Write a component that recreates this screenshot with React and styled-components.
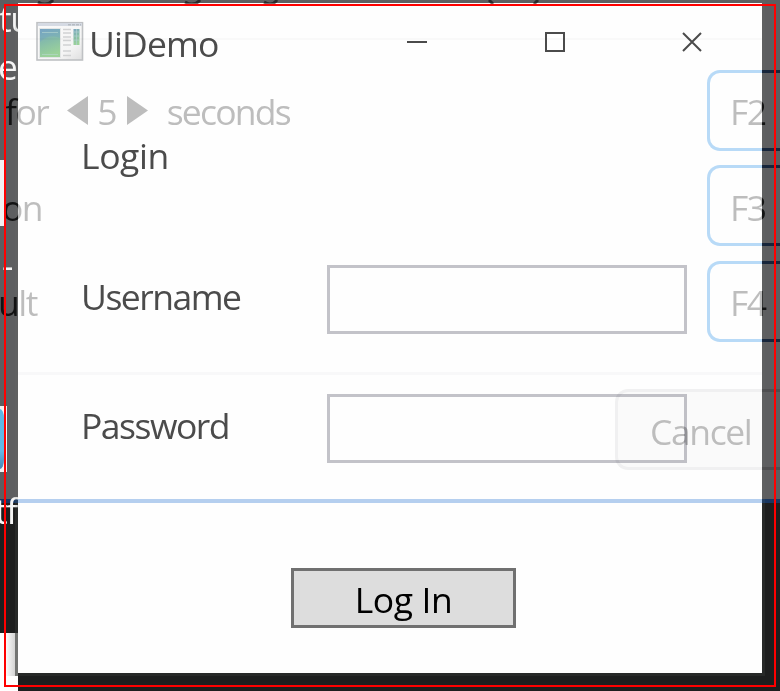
import React from "react";
import styled, { createGlobalStyle, css } from "styled-components";

const GlobalStyle = createGlobalStyle`
  * { box-sizing: border-box; }
  body { margin: 0; background: #1d1e1e; overflow: hidden; }
`;

const type = css`
  font-family: "Open Sans", "Noto Sans", sans-serif;
  font-size: 35.5px;
  font-weight: 400;
  line-height: 48px;
  white-space: pre;
  letter-spacing: ${(p) => p.$track ?? -1.5}px;
`;

const Desktop = styled.main`
  position: relative;
  width: 780px;
  height: 691px;
  overflow: hidden;
  display: grid;
  grid-template-columns: 18px 744px 18px;
  grid-template-rows: 3px 670px 18px;
  background: linear-gradient(#5d5e60 0 499px, #183660 499px 503px, #1d1e1e 503px);
`;

const Window = styled.section`
  grid-column: 2;
  grid-row: 2;
  display: flex;
  flex-direction: column;
  background: #fefefe;
  box-shadow: 0 0 0 3px rgba(112, 116, 110, 0.13);
`;

const TitleBar = styled.header`
  display: flex;
  height: 76px;
  padding: 17px 0 0 17px;
`;

const Title = styled.h1`
  ${type}
  margin: -1px 0 0 5px;
  width: 317px;
  color: #4b4b4b;
`;

const Controls = styled.div`
  display: flex;
  gap: 115.5px;
  padding-top: 11px;
  height: 34px;
`;

const ControlButton = styled.button`
  display: block;
  width: 22px;
  height: 22px;
  padding: 0;
  border: 0;
  background: none;
  svg { display: block; }
`;

const Form = styled.form`
  display: flex;
  flex-direction: column;
  padding: 52px 0 0 63px;
`;

const Heading = styled.h2`
  ${type}
  margin: 0 0 86px;
  color: #4b4b4b;
`;

const Field = styled.label`
  display: flex;
  align-items: flex-start;
  height: 129px;
`;

const FieldLabel = styled.span`
  ${type}
  width: 246px;
  padding-top: 7px;
  color: #4b4b4b;
`;

const Input = styled.input`
  width: 360px;
  height: 69px;
  padding: 0 10px;
  border: 3px solid #c3c3c9;
  border-radius: 0;
  background: transparent;
  outline: 0;
`;

const Submit = styled.button`
  ${type}
  width: 225px;
  height: 60px;
  margin: 45px 0 0 210px;
  padding: 2px 0 0;
  border: 3px solid #707070;
  border-radius: 0;
  background: #ddd;
  color: #000;
`;

const Selection = styled.div`
  position: absolute;
  inset: 4px 4px 4px 4px;
  border: 2px solid #f00;
  pointer-events: none;
`;

/* Dialog content that shows through the translucent window. */
const Ghost = styled.div`
  position: absolute;
  inset: 0;
  display: flex;
  justify-content: space-between;
  pointer-events: none;
  mix-blend-mode: multiply;
  background: linear-gradient(
      transparent 38px, #fafafa 38px 40px, transparent 40px 372px,
      #f9f9fa 372px 375px, transparent 375px 499px, #b6d0f0 499px 503px, transparent 503px
    ) 18px 0 / 744px 100% no-repeat;
`;

const GhostLines = styled.div`
  display: flex;
  flex-direction: column;
  gap: 47.5px;
  padding-top: 87px;
`;

const GhostLine = styled.div`
  display: flex;
  align-items: center;
  height: 48px;
  padding-left: ${(p) => p.$indent}px;
`;

const split = css`
  color: transparent;
  background: linear-gradient(90deg, ${(p) => p.$from} ${(p) => p.$at}px, ${(p) => p.$to} ${(p) => p.$at}px);
  -webkit-background-clip: text;
  background-clip: text;
`;

const EdgeWord = styled.span`
  ${type}
  ${split}
  padding-right: 3px;
  margin-left: ${(p) => p.$pull || 0}px;
`;

const GhostWord = styled.span`
  ${type}
  color: #bebebe;
`;

const Stepper = styled.div`
  display: flex;
  align-items: center;
  gap: 9px;
  margin: 0 19px 0 16px;
  svg { display: block; margin-top: -1px; }
`;

const GhostKeys = styled.div`
  display: flex;
  flex-direction: column;
  align-items: flex-end;
  gap: 14.5px;
  padding-top: 69.5px;
`;

const Key = styled.div`
  display: flex;
  width: ${(p) => p.$width}px;
  height: 81px;
  margin-top: ${(p) => p.$gap || 0}px;
`;

const KeyFace = styled.div`
  flex: 1;
  display: flex;
  align-items: center;
  padding: 2px 0 0 ${(p) => p.$inset}px;
  min-width: 0;
  border: 3px solid ${(p) => p.$color};
  border-right: 0;
  border-radius: 13px 0 0 13px;
  background: ${(p) => p.$fill || "transparent"};
`;

const KeyTail = styled.div`
  width: 18px;
  border: solid ${(p) => p.$color};
  border-width: 3px 0;
`;

const LeftEdge = styled.aside`
  grid-column: 1;
  grid-row: 1 / 4;
  display: flex;
  flex-direction: column;
  height: 691px;
  overflow: hidden;
`;

const EdgeText = styled.span`
  ${type}
  height: 48px;
  flex: none;
  margin-top: ${(p) => p.$gap || 0}px;
  text-indent: ${(p) => p.$indent}px;
  color: #f4f4f4;
`;

const Tile = styled.div`
  flex: none;
  width: ${(p) => p.$w}px;
  height: 66px;
  margin-top: ${(p) => p.$gap}px;
  padding-top: 3px;
  overflow: hidden;
  background: #f1f1f2;
`;

const Blob = styled.div`
  width: 4px;
  height: 60px;
  border-radius: 0 4px 4px 0 / 0 9px 9px 0;
  background: linear-gradient(#5bb8e4, #62b9e6 70%, #4a86b4);
`;

const Paper = styled.div`
  flex: none;
  height: 58px;
  margin-top: 99px;
  background: #fff;
`;

const PaperShade = styled.div`
  height: 43px;
  background: linear-gradient(90deg, #fff 5px, #d4d4d4 15px, #737573 15px);
`;

const Hooks = styled.svg`
  position: absolute;
  left: 0;
  top: 0;
`;

function AppIcon() {
  return (
    <svg width="49" height="41" viewBox="0 0 49 41" aria-hidden="true">
      <defs>
        <linearGradient id="pane" x1="0" y1="0" x2="0.25" y2="1">
          <stop offset="0" stopColor="#7ba6c2" />
          <stop offset="0.5" stopColor="#86bda9" />
          <stop offset="1" stopColor="#9bd29a" />
        </linearGradient>
        <linearGradient id="face" x1="0" y1="0" x2="1" y2="1">
          <stop offset="0" stopColor="#fafafa" />
          <stop offset="0.7" stopColor="#f5f5f5" />
          <stop offset="1" stopColor="#dededf" />
        </linearGradient>
      </defs>
      <rect x="2" y="2.7" width="45.5" height="37.3" fill="url(#face)" stroke="#bfc1c4" strokeWidth="1.6" />
      <path d="M3 4.5H47" stroke="#d5dae3" strokeWidth="3" />
      <path d="M33 4.7H46" stroke="#b6bbc2" strokeWidth="1.6" strokeDasharray="3 1" />
      <rect x="4" y="8" width="22" height="30" fill="#e3e6e6" />
      <rect x="5" y="9" width="20" height="28" fill="url(#pane)" />
      <path d="M5 22Q14 13 25 18V9H5Z" fill="#6c9fca" opacity=".3" />
      <path d="M7 12.5H23M7 34.5H23" stroke="#b8d9d2" strokeWidth="1" opacity=".6" />
      <path d="M28 9.5H36M28 13H36M28 17H36M28 20.5H36M28 25H36M28 31H36M28 35.5H36" stroke="#d1d2d3" strokeWidth="1.3" />
      <rect x="38.5" y="9" width="6" height="16" fill="url(#pane)" />
      <path d="M38.5 12H44.5M38.5 16H44.5M38.5 20H44.5M41.5 9V25" stroke="#b2d0d2" strokeWidth=".7" />
    </svg>
  );
}

function ControlIcon({ d }) {
  return (
    <svg width="22" height="22" viewBox="0 0 22 22" fill="none" stroke="#4b4b4b" strokeWidth="2">
      <path d={d} />
    </svg>
  );
}

function Arrow({ d }) {
  return (
    <svg width="21" height="29" viewBox="0 0 21 29" fill="#bebebe">
      <path d={d} />
    </svg>
  );
}

const fields = [
  { label: "Username", type: "text" },
  { label: "Password", type: "password" },
];

export default function App() {
  return (
    <>
      <GlobalStyle />
      <Desktop>
        <LeftEdge>
          <EdgeText $indent={-1} $gap={-6}>tu</EdgeText>
          <EdgeText $indent={-2}>e</EdgeText>
          <Tile $gap={70} $w={6} />
          <EdgeText $indent={2} $gap={14}>-</EdgeText>
          <Tile $gap={118} $w={7}><Blob /></Tile>
          <EdgeText $indent={-5} $gap={14}>tf</EdgeText>
          <Paper><PaperShade /></Paper>
        </LeftEdge>
        <Window>
          <TitleBar>
            <AppIcon />
            <Title $track={-0.9}>UiDemo</Title>
            <Controls>
              <ControlButton aria-label="Minimize"><ControlIcon d="M1 11H21" /></ControlButton>
              <ControlButton aria-label="Maximize"><ControlIcon d="M2 2H20V20H2Z" /></ControlButton>
              <ControlButton aria-label="Close"><ControlIcon d="M2 2L20 20M20 2L2 20" /></ControlButton>
            </Controls>
          </TitleBar>
          <Form>
            <Heading $track={-0.4}>Login</Heading>
            {fields.map((f) => (
              <Field key={f.label}>
                <FieldLabel>{f.label}</FieldLabel>
                <Input type={f.type} />
              </Field>
            ))}
            <Submit type="button" $track={-0.4}>Log In</Submit>
          </Form>
        </Window>
        <Ghost>
          <GhostLines>
            <GhostLine $indent={5}>
              <EdgeWord $from="#303132" $to="#bebebe" $at={13}>for</EdgeWord>
              <Stepper>
                <Arrow d="M21 0V29L0 14.5Z" />
                <GhostWord $track={0}>5</GhostWord>
                <Arrow d="M0 0V29L21 14.5Z" />
              </Stepper>
              <GhostWord $track={-1.75}>seconds</GhostWord>
            </GhostLine>
            <GhostLine $indent={2}>
              <EdgeWord $from="#303132" $to="#bebebe" $at={16}>on</EdgeWord>
            </GhostLine>
            <GhostLine $indent={0}>
              <EdgeWord $pull={-2} $from="#303132" $to="#bebebe" $at={20}>ult</EdgeWord>
            </GhostLine>
          </GhostLines>
          <GhostKeys>
            {["F2", "F3", "F4"].map((name) => (
              <Key key={name} $width={73}>
                <KeyFace $inset={20} $color="#b9dbf8">
                  <EdgeWord $from="#bebebe" $to="#303132" $at={32}>{name}</EdgeWord>
                </KeyFace>
                <KeyTail $color="#3c649c" />
              </Key>
            ))}
            <Key $width={165} $gap={33}>
              <KeyFace $inset={32} $color="rgba(0,0,25,.045)" $fill="rgba(0,0,20,.016)">
                <GhostWord $track={-1.4}>Cancel</GhostWord>
              </KeyFace>
              <KeyTail $color="#d4d4d4" />
            </Key>
          </GhostKeys>
          <Hooks width="780" height="8" viewBox="0 0 780 8">
            <g fill="none" stroke="#707070" strokeWidth="3">
              <path d="M38 2Q47 7 53 0M185 2Q194 7 200 0M264 2Q272 7 277 0M489 0L493 4M538 0L534 4" />
            </g>
          </Hooks>
        </Ghost>
        <Selection />
      </Desktop>
    </>
  );
}
